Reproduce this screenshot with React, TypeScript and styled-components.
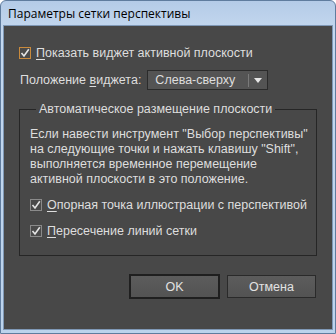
import React from "react";
import styled, { createGlobalStyle } from "styled-components";

const Global = createGlobalStyle`
  html, body { margin: 0; padding: 0; background: #ffffff; }
  body { font-family: "Liberation Sans", Arial, sans-serif; }
`;

const Window = styled.div`
  width: 336px;
  height: 334px;
  box-sizing: border-box;
  display: flex;
  flex-direction: column;
  background: linear-gradient(#b4cbe7, #c4d8ef 30px, #bcd3ec);
  border: 1px solid #5f7c9e;
  border-radius: 6px 6px 0 0;
  overflow: hidden;
`;

const TitleBar = styled.div`
  height: 24px;
  flex: none;
  display: flex;
  align-items: center;
  padding-left: 7px;
  font-family: "Open Sans", "Liberation Sans", sans-serif;
  font-size: 12px;
  color: #000;
`;

const Content = styled.div`
  flex: 1;
  margin: 0 2px 3px 2px;
  background: #484848;
  border: 1px solid #7f98b6;
  padding: 20px 15px 0 15px;
  display: flex;
  flex-direction: column;
  color: #dedede;
  font-size: 12.5px;
  white-space: nowrap;
`;

const CheckRow = styled.label`
  display: flex;
  align-items: center;
  gap: 5px;
  height: 14px;
`;

const Box = styled.span<{ $focus?: boolean }>`
  width: 12px;
  height: 12px;
  box-sizing: border-box;
  border: 1px solid ${(p) => (p.$focus ? "#c98a3c" : "#8a8a8a")};
  background: #4a4a4a;
  display: flex;
  align-items: center;
  justify-content: center;
  flex: none;
`;

const Key = styled.span`
  text-decoration: underline;
  text-underline-offset: 2px;
`;

const PosRow = styled.div`
  display: flex;
  align-items: center;
  margin-top: 10px;
  gap: 6px;
  padding-left: 1px;
`;

const Select = styled.div`
  width: 121px;
  height: 20px;
  box-sizing: border-box;
  border: 1px solid #2b2b2b;
  background: #545454;
  display: flex;
  align-items: center;
  padding-left: 7px;
  font-size: 12.5px;
`;

const SelectText = styled.span`
  flex: 1;
`;

const Sep = styled.span`
  width: 1px;
  height: 13px;
  background: #7a7a7a;
  margin-right: 5px;
`;

const Arrow = styled.span`
  width: 0;
  height: 0;
  border-left: 4px solid transparent;
  border-right: 4px solid transparent;
  border-top: 5px solid #e6e6e6;
  margin-right: 5px;
`;

const Group = styled.fieldset`
  margin: 12px 0 0 0;
  padding: 11px 10px 17px 10px;
  border: 1px solid #262626;
  min-width: 0;
  display: flex;
  flex-direction: column;
`;

const Legend = styled.legend`
  padding: 0 3px;
  margin-left: 6px;
  font-size: 12.5px;
  line-height: 14px;
`;

const Para = styled.p`
  margin: 0;
  line-height: 15px;
  font-size: 12.5px;
`;

const GroupChecks = styled.div`
  display: flex;
  flex-direction: column;
  gap: 12px;
  margin-top: 11px;
`;

const Buttons = styled.div`
  display: flex;
  justify-content: flex-end;
  gap: 7px;
  margin-top: 18px;
  padding-right: 1px;
`;

const Button = styled.div<{ $default?: boolean }>`
  width: ${(p) => (p.$default ? "91px" : "89px")};
  height: ${(p) => (p.$default ? "25px" : "23px")};
  margin-top: ${(p) => (p.$default ? "0" : "1px")};
  box-sizing: border-box;
  border: ${(p) => (p.$default ? "2px solid #1f1f1f" : "1px solid #2a2a2a")};
  background: linear-gradient(#5c5c5c, #535353);
  display: flex;
  align-items: center;
  justify-content: center;
  font-size: 12.5px;
  color: #e2e2e2;
`;

const Check = () => (
  <svg width="10" height="10" viewBox="0 0 10 10">
    <path d="M1.5 5 L4 8 L8.8 1.2" fill="none" stroke="#e4e4e4" strokeWidth="1.6" />
  </svg>
);

export default function App() {
  return (
    <>
      <Global />
      <Window>
        <TitleBar>Параметры сетки перспективы</TitleBar>
        <Content>
          <CheckRow>
            <Box $focus>
              <Check />
            </Box>
            <span>
              <Key>П</Key>оказать виджет активной плоскости
            </span>
          </CheckRow>
          <PosRow>
            <span>
              Положение <Key>в</Key>иджета:
            </span>
            <Select>
              <SelectText>Слева-сверху</SelectText>
              <Sep />
              <Arrow />
            </Select>
          </PosRow>
          <Group>
            <Legend>Автоматическое размещение плоскости</Legend>
            <Para>
              Если навести инструмент "Выбор перспективы"
              <br />
              на следующие точки и нажать клавишу "Shift",
              <br />
              выполняется временное перемещение
              <br />
              активной плоскости в это положение.
            </Para>
            <GroupChecks>
              <CheckRow>
                <Box>
                  <Check />
                </Box>
                <span>
                  <Key>О</Key>порная точка иллюстрации с перспективой
                </span>
              </CheckRow>
              <CheckRow>
                <Box>
                  <Check />
                </Box>
                <span>
                  <Key>П</Key>ересечение линий сетки
                </span>
              </CheckRow>
            </GroupChecks>
          </Group>
          <Buttons>
            <Button $default>OK</Button>
            <Button>Отмена</Button>
          </Buttons>
        </Content>
      </Window>
    </>
  );
}
